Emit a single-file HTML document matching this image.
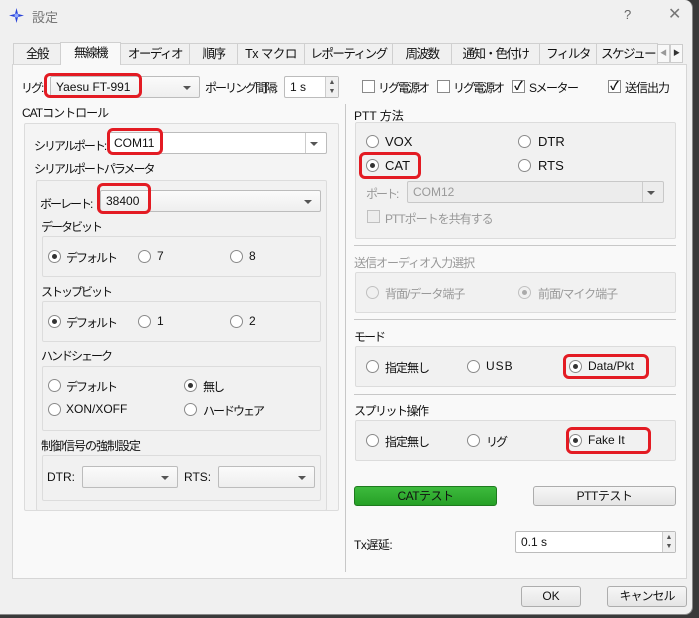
<!DOCTYPE html>
<html><head><meta charset="utf-8"><style>
*{box-sizing:border-box;margin:0;padding:0}
body{width:699px;height:618px;background:#3a3a3a;font-family:"Liberation Sans","Noto Sans CJK JP",sans-serif;font-size:12px;color:#111;position:relative;overflow:hidden}
.win{position:absolute;left:0;top:0;width:693px;height:615px;background:#f0f0f0;border-radius:0 8px 8px 0;border-right:1px solid #888;border-bottom:1px solid #888}
.a{position:absolute;white-space:nowrap;letter-spacing:-2px;z-index:3}
.a.l{letter-spacing:0}
.tab{position:absolute;top:43px;height:22px;border:1px solid #d0d0d0;border-bottom:none;background:#f0f0f0;text-align:center;line-height:20px;font-size:12.5px;letter-spacing:-1.5px;overflow:hidden}
.page{position:absolute;left:12px;top:64px;width:675px;height:515px;background:#f9f9f9;border:1px solid #d6d6d6}
.box{position:absolute;border:1px solid #dcdcdc;background:#f1f1f1;border-radius:2px}
.combo{position:absolute;height:22px;border:1px solid #bcbcbc;border-radius:2px;background:linear-gradient(#fbfbfb,#eeeeee);line-height:20px;padding-left:5px}
.combo.w{background:#fff}
.combo:after{content:"";position:absolute;right:8px;top:9px;border-left:4px solid transparent;border-right:4px solid transparent;border-top:4px solid #555}
.combo .sep{position:absolute;right:20px;top:0;bottom:0;border-left:1px solid #ccc}
.r{position:absolute;width:13px;height:13px;border:1px solid #8a8a8a;border-radius:50%;background:#fff}
.r.on:after{content:"";position:absolute;left:3px;top:3px;width:5px;height:5px;border-radius:50%;background:#333}
.r.dis{border-color:#c0c0c0;background:#f0f0f0}
.r.dis.on:after{background:#aaa}
.cb{position:absolute;width:13px;height:13px;border:1px solid #8a8a8a;background:#fff;font-size:12px;line-height:11px;text-align:center;font-weight:bold}
.hl{position:absolute;border:3px solid #e31b23;border-radius:6px;z-index:4}
.btn{position:absolute;height:21px;border:1px solid #adadad;border-radius:3px;background:linear-gradient(#f6f6f6,#e5e5e5);text-align:center;line-height:19px;letter-spacing:-1px}
.line{position:absolute;height:1px;background:#c8c8c8}
.spin{position:absolute;height:22px;border:1px solid #bcbcbc;background:#fff;line-height:20px;padding-left:5px;border-radius:2px}
.spin .s{position:absolute;right:0;top:0;bottom:0;width:13px;border-left:1px solid #ccc;background:#f0f0f0;font-size:7px;line-height:9px;text-align:center;color:#555;padding-top:1px}
.g{color:#999}
</style></head><body>
<div class="win">
<svg class="a" style="left:9px;top:8px" width="15" height="15" viewBox="0 0 15 15"><path d="M7.5 0 L9 6 L15 7.5 L9 9 L7.5 15 L6 9 L0 7.5 L6 6Z" fill="#2a44d8"/><circle cx="7.5" cy="7.5" r="2" fill="#8fa8ff"/></svg>
<div class="a" style="left:32px;top:7px;color:#777;font-size:13px;letter-spacing:0">設定</div>
<div class="a" style="left:624px;top:7px;color:#666;font-size:13px">?</div>
<div class="a" style="left:668px;top:4px;color:#777;font-size:16px">✕</div>

<div class="tab" style="left:13px;width:48px">全般</div>
<div class="tab" style="left:60px;width:61px;top:42px;height:23px;background:#f9f9f9;z-index:2">無線機</div>
<div class="tab" style="left:120px;width:70px">オーディオ</div>
<div class="tab" style="left:189px;width:49px">順序</div>
<div class="tab" style="left:237px;width:68px;letter-spacing:-0.5px">Tx マクロ</div>
<div class="tab" style="left:304px;width:89px">レポーティング</div>
<div class="tab" style="left:392px;width:60px">周波数</div>
<div class="tab" style="left:451px;width:89px">通知・色付け</div>
<div class="tab" style="left:539px;width:58px">フィルタ</div>
<div class="tab" style="left:596px;width:62px;text-align:left;padding-left:4px">スケジューラ</div>
<div class="a" style="left:657px;top:44px;width:13px;height:19px;border:1px solid #ccc;background:#f8f8f8;font-size:7px;line-height:17px;text-align:center;color:#999;letter-spacing:0">◀</div>
<div class="a" style="left:670px;top:44px;width:13px;height:19px;border:1px solid #ccc;background:#f8f8f8;font-size:7px;line-height:17px;text-align:center;color:#333;letter-spacing:0">▶</div>

<div class="page"></div>

<!-- top row -->
<div class="a" style="left:21px;top:79px">リグ:</div>
<div class="combo" style="left:50px;top:76px;width:150px">Yaesu FT-991</div>
<div class="a" style="left:205px;top:79px">ポーリング間隔:</div>
<div class="spin" style="left:284px;top:76px;width:55px">1 s<div class="s">▲<br>▼</div></div>
<div class="cb" style="left:362px;top:80px"></div><div class="a" style="left:378px;top:79px">リグ電源オ</div>
<div class="cb" style="left:437px;top:80px"></div><div class="a" style="left:453px;top:79px">リグ電源オ</div>
<div class="cb" style="left:512px;top:80px">✓</div><div class="a" style="left:529px;top:79px;letter-spacing:-1.5px">Sメーター</div>
<div class="cb" style="left:608px;top:80px">✓</div><div class="a" style="left:625px;top:79px;letter-spacing:-1px">送信出力</div>
<div class="hl" style="left:44px;top:73px;width:98px;height:25px"></div>

<div class="a" style="left:345px;top:104px;width:1px;height:468px;background:#c8c8c8"></div>

<!-- left -->
<div class="a" style="left:22px;top:104px;letter-spacing:-1px">CATコントロール</div>
<div class="box" style="left:24px;top:123px;width:315px;height:388px;background:#f4f4f4"></div>
<div class="a" style="left:34px;top:137px">シリアルポート:</div>
<div class="combo w" style="left:108px;top:132px;width:219px">COM11<div class="sep"></div></div>
<div class="hl" style="left:107px;top:128px;width:56px;height:27px"></div>
<div class="a" style="left:34px;top:160px">シリアルポートパラメータ</div>
<div class="box" style="left:36px;top:180px;width:291px;height:331px"></div>
<div class="a" style="left:40px;top:195px">ボーレート:</div>
<div class="combo" style="left:100px;top:190px;width:221px">38400</div>
<div class="hl" style="left:97px;top:183px;width:54px;height:31px"></div>

<div class="a" style="left:41px;top:218px">データビット</div>
<div class="box" style="left:42px;top:236px;width:279px;height:41px"></div>
<div class="r on" style="left:48px;top:250px"></div><div class="a" style="left:66px;top:249px">デフォルト</div>
<div class="r" style="left:138px;top:250px"></div><div class="a l" style="left:157px;top:249px">7</div>
<div class="r" style="left:230px;top:250px"></div><div class="a l" style="left:249px;top:249px">8</div>

<div class="a" style="left:41px;top:283px">ストップビット</div>
<div class="box" style="left:42px;top:301px;width:279px;height:41px"></div>
<div class="r on" style="left:48px;top:315px"></div><div class="a" style="left:66px;top:314px">デフォルト</div>
<div class="r" style="left:138px;top:315px"></div><div class="a l" style="left:157px;top:314px">1</div>
<div class="r" style="left:230px;top:315px"></div><div class="a l" style="left:249px;top:314px">2</div>

<div class="a" style="left:41px;top:347px">ハンドシェーク</div>
<div class="box" style="left:42px;top:366px;width:279px;height:65px"></div>
<div class="r" style="left:48px;top:379px"></div><div class="a" style="left:66px;top:378px">デフォルト</div>
<div class="r on" style="left:184px;top:379px"></div><div class="a" style="left:203px;top:378px">無し</div>
<div class="r" style="left:48px;top:403px"></div><div class="a l" style="left:66px;top:402px">XON/XOFF</div>
<div class="r" style="left:184px;top:403px"></div><div class="a" style="left:203px;top:402px">ハードウェア</div>

<div class="a" style="left:41px;top:437px;letter-spacing:-1px">制御信号の強制設定</div>
<div class="box" style="left:42px;top:455px;width:279px;height:46px"></div>
<div class="a l" style="left:47px;top:470px">DTR:</div>
<div class="combo" style="left:82px;top:466px;width:96px"></div>
<div class="a l" style="left:184px;top:470px">RTS:</div>
<div class="combo" style="left:218px;top:466px;width:97px"></div>

<!-- right -->
<div class="a" style="left:354px;top:107px;letter-spacing:0">PTT 方法</div>
<div class="box" style="left:355px;top:122px;width:321px;height:117px"></div>
<div class="r" style="left:366px;top:135px"></div><div class="a l" style="left:385px;top:134px;font-size:13px">VOX</div>
<div class="r" style="left:518px;top:135px"></div><div class="a l" style="left:538px;top:134px;font-size:13px">DTR</div>
<div class="r on" style="left:366px;top:159px"></div><div class="a l" style="left:385px;top:158px;font-size:13px">CAT</div>
<div class="r" style="left:518px;top:159px"></div><div class="a l" style="left:538px;top:158px;font-size:13px">RTS</div>
<div class="hl" style="left:359px;top:152px;width:62px;height:27px"></div>
<div class="a g" style="left:366px;top:185px">ポート:</div>
<div class="combo" style="left:407px;top:181px;width:257px;background:#ececec;border-color:#c8c8c8;color:#999">COM12<div class="sep"></div></div>
<div class="cb" style="left:367px;top:210px;border-color:#c0c0c0;background:#ededed"></div><div class="a g" style="left:385px;top:210px;letter-spacing:-1px">PTTポートを共有する</div>

<div class="line" style="left:354px;top:245px;width:322px"></div>
<div class="a g" style="left:354px;top:254px;letter-spacing:-1px">送信オーディオ入力選択</div>
<div class="box" style="left:355px;top:272px;width:321px;height:41px"></div>
<div class="r dis" style="left:366px;top:286px"></div><div class="a g" style="left:385px;top:285px;letter-spacing:-1px">背面/データ端子</div>
<div class="r dis on" style="left:518px;top:286px"></div><div class="a g" style="left:538px;top:285px;letter-spacing:-1px">前面/マイク端子</div>

<div class="line" style="left:354px;top:319px;width:322px"></div>
<div class="a" style="left:354px;top:328px">モード</div>
<div class="box" style="left:355px;top:346px;width:321px;height:41px"></div>
<div class="r" style="left:366px;top:360px"></div><div class="a" style="left:385px;top:359px;letter-spacing:-1px">指定無し</div>
<div class="r" style="left:467px;top:360px"></div><div class="a l" style="left:486px;top:359px;letter-spacing:1px">USB</div>
<div class="r on" style="left:569px;top:360px"></div><div class="a l" style="left:588px;top:359px">Data/Pkt</div>
<div class="hl" style="left:563px;top:354px;width:86px;height:25px"></div>

<div class="line" style="left:354px;top:394px;width:322px"></div>
<div class="a" style="left:354px;top:402px;letter-spacing:-1.5px">スプリット操作</div>
<div class="box" style="left:355px;top:420px;width:321px;height:41px"></div>
<div class="r" style="left:366px;top:434px"></div><div class="a" style="left:385px;top:433px;letter-spacing:-1px">指定無し</div>
<div class="r" style="left:467px;top:434px"></div><div class="a" style="left:486px;top:433px">リグ</div>
<div class="r on" style="left:569px;top:434px"></div><div class="a l" style="left:588px;top:433px">Fake It</div>
<div class="hl" style="left:566px;top:427px;width:85px;height:27px"></div>

<div class="btn" style="left:354px;top:486px;width:143px;height:20px;background:linear-gradient(#3dba3d,#26a026);border-color:#1f7a1f;line-height:18px;letter-spacing:-0.5px">CATテスト</div>
<div class="btn" style="left:533px;top:486px;width:143px;height:20px;line-height:18px;letter-spacing:-0.5px">PTTテスト</div>
<div class="a" style="left:354px;top:536px;letter-spacing:-0.5px">Tx遅延:</div>
<div class="spin" style="left:515px;top:531px;width:161px">0.1 s<div class="s">▲<br>▼</div></div>

<div class="btn" style="left:521px;top:586px;width:60px;letter-spacing:0">OK</div>
<div class="btn" style="left:607px;top:586px;width:80px">キャンセル</div>
</div>
</body></html>
